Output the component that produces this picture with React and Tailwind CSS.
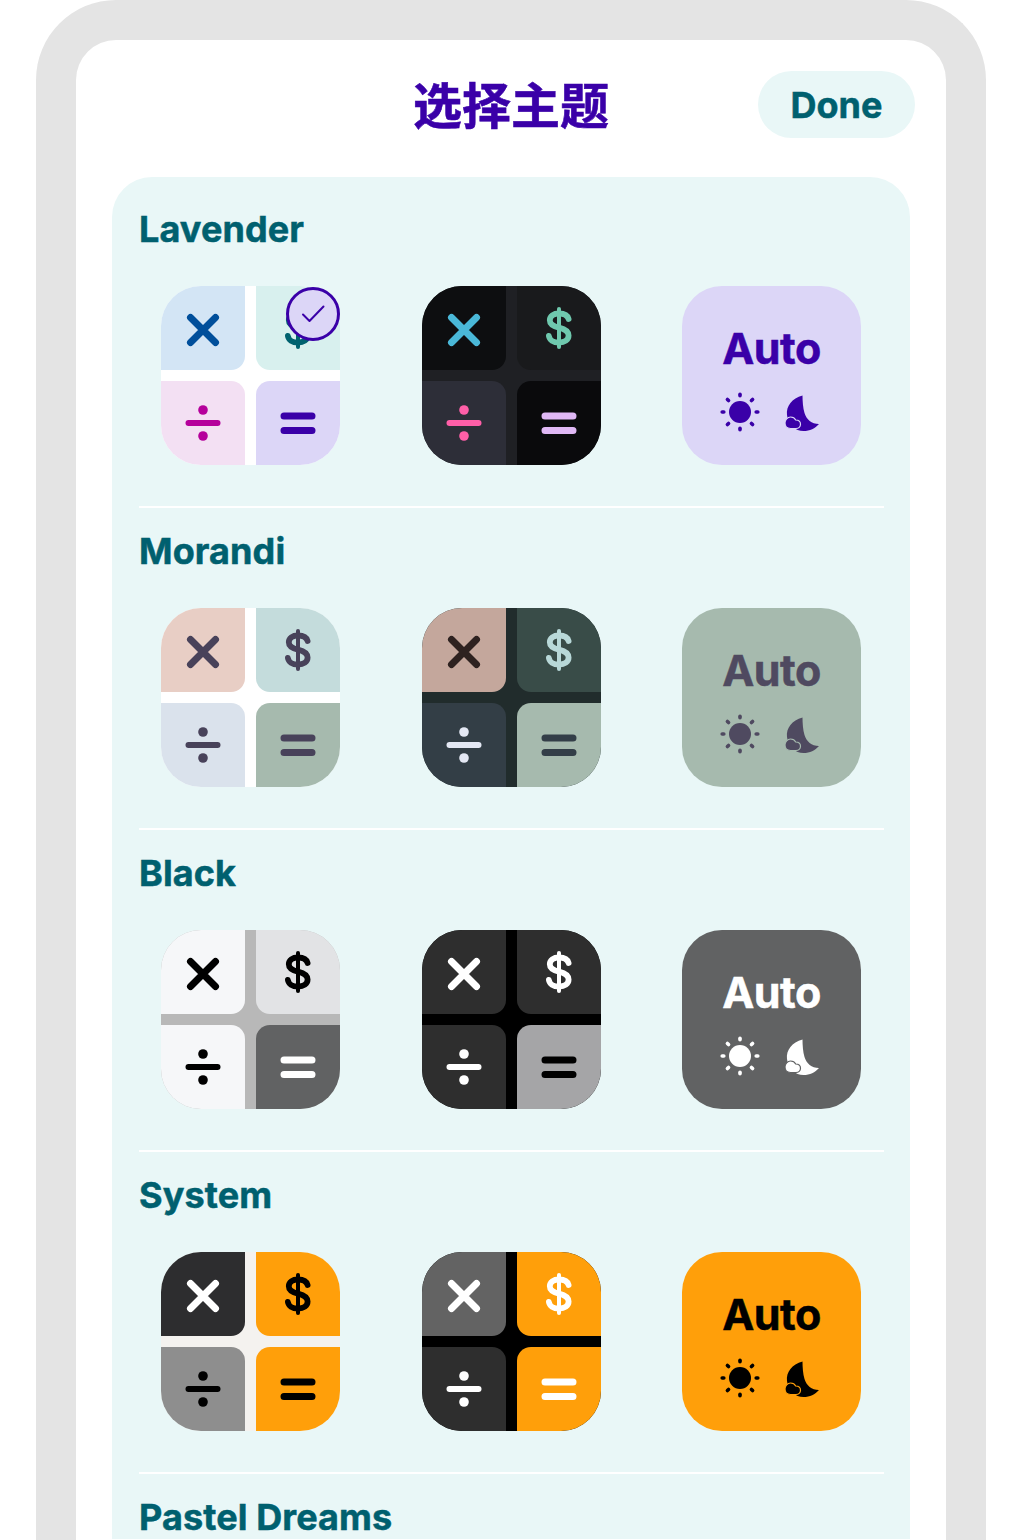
function Cross({ c }) {
  return (
    <svg width="36" height="36" viewBox="0 0 36 36" fill="none" className="translate-y-[2px]">
      <path d="M5.5 5.5L30.5 30.5M30.5 5.5L5.5 30.5" stroke={c} strokeWidth="7" strokeLinecap="round" />
    </svg>
  );
}
function Dollar({ c }) {
  return (
    <svg width="30" height="44" viewBox="0 0 30 44" fill="none">
      <path d="M15 3V41" stroke={c} strokeWidth="4" strokeLinecap="round" />
      <path d="M24.6 13C23.6 9.3 20 7.5 15 7.5C9.5 7.5 5.8 10 5.8 14.2C5.8 18.5 9.5 20.3 15 21.6C20.5 22.9 24.6 24.8 24.6 29.6C24.6 34 20.5 36.5 15 36.5C9.5 36.5 5.4 34 4.9 30" stroke={c} strokeWidth="5.8" strokeLinecap="round" />
    </svg>
  );
}
function Divide({ c }) {
  return (
    <svg width="38" height="38" viewBox="0 0 38 38" fill="none">
      <path d="M4.5 19H33.5" stroke={c} strokeWidth="6" strokeLinecap="round" />
      <circle cx="19" cy="6" r="4.8" fill={c} />
      <circle cx="19" cy="32" r="4.8" fill={c} />
    </svg>
  );
}
function Equals({ c }) {
  return (
    <svg width="36" height="26" viewBox="0 0 36 26" fill="none">
      <path d="M4 6H32M4 20.5H32" stroke={c} strokeWidth="7" strokeLinecap="round" />
    </svg>
  );
}
function Sun({ c }) {
  const rays = [0, 45, 90, 135, 180, 225, 270, 315];
  return (
    <svg width="42" height="42" viewBox="0 0 42 42" fill="none">
      <circle cx="21" cy="21" r="11" fill={c} />
      {rays.map((a) => (
        <path key={a} d="M21 3.2V4.8" stroke={c} strokeWidth="3.6" strokeLinecap="round" transform={`rotate(${a} 21 21)`} />
      ))}
    </svg>
  );
}
function Moon({ c, bg }) {
  return (
    <svg width="36" height="38" viewBox="0 0 36 38" fill="none">
      <path d="M18.5 0.5C8 3.5 2 11 3 20C4 30 11.5 36 19.5 36C26 36 31 33.5 35 29C27.5 29 22.5 24.5 20.5 18C19 13 18.5 6 18.5 0.5Z" fill={c} />
      <path d="M6.5 33.5C3 33.5 1 31 1 28C1 25 3.5 22 6.5 22C9 22 11 23.5 11.7 25C14.5 25 16.5 26.8 16.5 29.3C16.5 31.8 14.5 33.5 12 33.5Z" fill={c} stroke={bg} strokeWidth="1.2" />
    </svg>
  );
}

function Tile({ bg, corner, children }) {
  return (
    <div className={`flex items-center justify-center ${corner}`} style={{ background: bg }}>
      {children}
    </div>
  );
}

function Calc({ t, selected }) {
  return (
    <div className="relative h-[179px] w-[179px]">
      <div
        className="grid h-full w-full grid-cols-[84px_84px] grid-rows-[84px_84px] gap-[11px] overflow-hidden rounded-[40px]"
        style={{ background: t.bg }}
      >
        <Tile bg={t.tiles[0]} corner="rounded-br-[14px]"><Cross c={t.glyphs[0]} /></Tile>
        <Tile bg={t.tiles[1]} corner="rounded-bl-[14px]"><Dollar c={t.glyphs[1]} /></Tile>
        <Tile bg={t.tiles[2]} corner="rounded-tr-[14px]"><Divide c={t.glyphs[2]} /></Tile>
        <Tile bg={t.tiles[3]} corner="rounded-tl-[14px]"><Equals c={t.glyphs[3]} /></Tile>
      </div>
      {selected && (
        <div className="absolute left-[125px] top-[1px] flex h-[54px] w-[54px] items-center justify-center rounded-full border-[3px] border-[#3a00a8] bg-[#dcd6f7]">
          <svg width="24" height="20" viewBox="0 0 24 20" fill="none">
            <path d="M2 10.5L8.5 17L22.5 2.5" stroke="#3a00a8" strokeWidth="2" strokeLinecap="round" strokeLinejoin="round" />
          </svg>
        </div>
      )}
    </div>
  );
}

function Auto({ bg, fg }) {
  return (
    <div className="flex h-[179px] w-[179px] flex-col items-center rounded-[40px]" style={{ background: bg }}>
      <div className="mt-[37px] h-[50px] text-[43px] font-bold leading-[50px] tracking-[-0.5px] [-webkit-text-stroke:0.5px_currentColor] [font-family:Inter,sans-serif]" style={{ color: fg }}>
        Auto
      </div>
      <div className="ml-[37px] mt-[18px] flex items-start gap-[23px] self-start">
        <Sun c={fg} />
        <div className="mt-[4px]"><Moon c={fg} bg={bg} /></div>
      </div>
    </div>
  );
}

const themes = [
  {
    name: 'Lavender',
    selected: true,
    light: { bg: '#ffffff', tiles: ['#d3e5f5', '#d8f0ee', '#f3e0f3', '#dcd6f7'], glyphs: ['#004f9b', '#00626f', '#b5009b', '#3a00a8'] },
    dark: { bg: '#1f2024', tiles: ['#0d0e10', '#191a1c', '#2d2e38', '#0a0a0c'], glyphs: ['#4ab8d8', '#6fc9ae', '#ff5fa8', '#e0b8f5'] },
    auto: { bg: '#dcd6f7', fg: '#3a00a8' },
  },
  {
    name: 'Morandi',
    light: { bg: '#ffffff', tiles: ['#e8cec5', '#c4dcdc', '#dae2ec', '#a6baae'], glyphs: ['#48425a', '#48425a', '#48425a', '#48425a'] },
    dark: { bg: '#212c2c', tiles: ['#c4a79c', '#394c48', '#333e46', '#a6baae'], glyphs: ['#2e2220', '#b8d8d8', '#e4e8f4', '#333e48'] },
    auto: { bg: '#a6baae', fg: '#4f4a60' },
  },
  {
    name: 'Black',
    light: { bg: '#b8b8b8', tiles: ['#f6f7f9', '#e2e3e5', '#f6f7f9', '#616263'], glyphs: ['#000000', '#000000', '#000000', '#ffffff'] },
    dark: { bg: '#000000', tiles: ['#2e2e2e', '#2e2e2e', '#2e2e2e', '#a5a5a7'], glyphs: ['#ffffff', '#ffffff', '#ffffff', '#000000'] },
    auto: { bg: '#616263', fg: '#ffffff' },
  },
  {
    name: 'System',
    light: { bg: '#f4f2ef', tiles: ['#2d2d2f', '#ff9f0a', '#8e8e8e', '#ff9f0a'], glyphs: ['#ffffff', '#000000', '#000000', '#000000'] },
    dark: { bg: '#000000', tiles: ['#636363', '#ff9f0a', '#2e2e2e', '#ff9f0a'], glyphs: ['#ffffff', '#ffffff', '#ffffff', '#ffffff'] },
    auto: { bg: '#ff9f0a', fg: '#000000' },
  },
];

function Title({ children }) {
  return (
    <h2 className="h-[44px] text-[36px] font-bold leading-[44px] tracking-[0.1px] text-[#00606f] [-webkit-text-stroke:0.5px_#00606f] [font-family:Inter,sans-serif]">
      {children}
    </h2>
  );
}

export default function App() {
  return (
    <div className="h-[1540px] w-[1021px] overflow-hidden bg-white">
      <div className="ml-[36px] h-[1700px] w-[950px] rounded-t-[80px] border-[40px] border-b-0 border-[#e4e4e4] bg-white">
        <header className="relative flex h-[137px] justify-center pt-[33px]">
          <h1 className="text-[49px] font-bold leading-[60px] text-[#3a00a8] [-webkit-text-stroke:0.6px_#3a00a8] [font-family:'Noto_Sans_CJK_SC',sans-serif]">选择主题</h1>
          <button className="absolute right-[31px] top-[31px] h-[67px] w-[157px] rounded-full bg-[#e9f7f7] text-[36px] font-bold text-[#00606f] [-webkit-text-stroke:0.5px_#00606f] [font-family:Inter,sans-serif]">
            Done
          </button>
        </header>
        <main className="mx-[36px] rounded-t-[40px] bg-[#e9f7f7] pl-[27px] pr-[26px] pt-[30px]">
          {themes.map((t) => (
            <section key={t.name}>
              <Title>{t.name}</Title>
              <div className="mt-[35px] flex justify-between pl-[22px] pr-[23px]">
                <Calc t={t.light} selected={t.selected} />
                <Calc t={t.dark} />
                <Auto bg={t.auto.bg} fg={t.auto.fg} />
              </div>
              <div className="mb-[21px] mt-[41px] h-[2px] bg-white" />
            </section>
          ))}
          <Title>Pastel Dreams</Title>
        </main>
      </div>
    </div>
  );
}
